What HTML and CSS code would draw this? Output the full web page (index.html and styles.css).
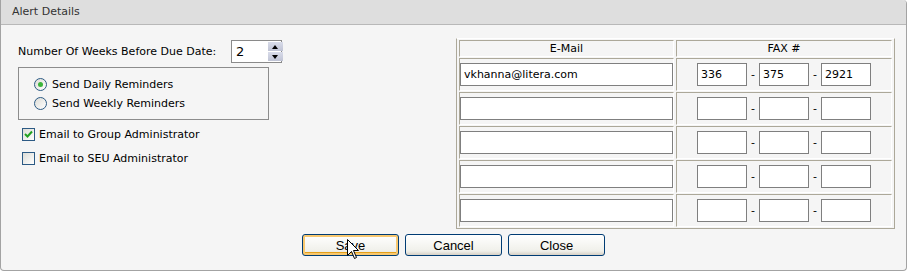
FILE: index.html
```html
<!DOCTYPE html>
<html lang="en">
<head>
    <meta charset="UTF-8">
    <title>Alert Details</title>
    <link rel="stylesheet" href="styles.css">
</head>
<body>
    <div class="panel">
        <div class="panel-title">Alert Details</div>
        <div class="panel-body">
            <div class="options">
                <div class="weeks-row">
                    <label for="weeks">Number Of Weeks Before Due Date:</label>
                    <div class="spinner">
                        <input type="text" id="weeks" value="2">
                        <div class="spin-buttons">
                            <span class="spin up"></span>
                            <span class="spin down"></span>
                        </div>
                    </div>
                </div>

                <div class="reminders">
                    <div class="radio-row"><span class="radio checked"></span>Send Daily Reminders</div>
                    <div class="radio-row"><span class="radio"></span>Send Weekly Reminders</div>
                </div>

                <div class="check-row">
                    <span class="checkbox">
                        <svg width="11" height="11" viewBox="0 0 11 11"><path d="M2 5 L4.5 7.5 L9 2.5" fill="none" stroke="#21a121" stroke-width="2"/></svg>
                    </span>Email to Group Administrator
                </div>
                <div class="check-row"><span class="checkbox"></span>Email to SEU Administrator</div>
            </div>

            <table class="contacts">
                <tr>
                    <th class="email-col">E-Mail</th>
                    <th class="fax-col">FAX #</th>
                </tr>
                <tr>
                    <td><input type="text" class="email" value="vkhanna@litera.com"></td>
                    <td><div class="fax"><input type="text" value="336"><span>-</span><input type="text" value="375"><span>-</span><input type="text" value="2921"></div></td>
                </tr>
                <tr>
                    <td><input type="text" class="email"></td>
                    <td><div class="fax"><input type="text"><span>-</span><input type="text"><span>-</span><input type="text"></div></td>
                </tr>
                <tr>
                    <td><input type="text" class="email"></td>
                    <td><div class="fax"><input type="text"><span>-</span><input type="text"><span>-</span><input type="text"></div></td>
                </tr>
                <tr>
                    <td><input type="text" class="email"></td>
                    <td><div class="fax"><input type="text"><span>-</span><input type="text"><span>-</span><input type="text"></div></td>
                </tr>
                <tr>
                    <td><input type="text" class="email"></td>
                    <td><div class="fax"><input type="text"><span>-</span><input type="text"><span>-</span><input type="text"></div></td>
                </tr>
            </table>
        </div>

        <div class="actions">
            <button type="button" class="focused">Save</button>
            <button type="button">Cancel</button>
            <button type="button">Close</button>
        </div>

        <svg class="cursor" width="13" height="21" viewBox="0 0 13 21">
            <path d="M0.5 0.5 L0.5 16.5 L4.5 12.5 L7.5 19.5 L9.5 18.5 L6.5 11.5 L11.5 11.5 Z" fill="#fff" stroke="#000" stroke-width="1"/>
        </svg>
    </div>
</body>
</html>
```

FILE: styles.css
```css
/* Page */
body {
    margin: 0;
    font-family: "DejaVu Sans", Tahoma, sans-serif;
    font-size: 11px;
    color: #000;
}

/* Panel */
.panel {
    position: relative;
    width: 907px;
    height: 271px;
    box-sizing: border-box;
    background: #f5f5f5;
    border: 1px solid #a3a3a3;
    border-top: none;
    border-radius: 0 4px 4px 4px;
}

.panel-title {
    height: 24px;
    line-height: 24px;
    padding-left: 11px;
    background: #dedede;
    border-bottom: 1px solid #b8b8b8;
    border-top-right-radius: 4px;
    color: #333;
    font-size: 11px;
}

.panel-body {
    display: flex;
    justify-content: space-between;
    padding: 13px 11px 0 17px;
}

/* Left column */
.options {
    width: 437px;
}

.weeks-row {
    display: flex;
    align-items: center;
    margin-top: 2px;
    height: 23px;
}

.weeks-row label {
    width: 213px;
}

.spinner {
    display: flex;
    align-items: center;
    width: 51px;
    height: 23px;
    box-sizing: border-box;
    border: 1px solid #8a8a8a;
    background: #fff;
}

.spinner input {
    width: 30px;
    border: none;
    outline: none;
    padding: 0 0 0 4px;
    font-family: inherit;
    font-size: 13px;
    background: transparent;
}

.spin-buttons {
    display: flex;
    flex-direction: column;
    gap: 1px;
    margin-left: 2px;
}

.spin {
    position: relative;
    width: 15px;
    height: 9px;
    background: linear-gradient(#d9dcea, #bfc3d4);
}

.spin::after {
    content: "";
    position: absolute;
    left: 4px;
    border-left: 3.5px solid transparent;
    border-right: 3.5px solid transparent;
}

.spin.up::after {
    top: 3px;
    border-bottom: 4px solid #000;
}

.spin.down::after {
    top: 3px;
    border-top: 4px solid #000;
}

.reminders {
    width: 251px;
    height: 53px;
    box-sizing: border-box;
    margin-top: 4px;
    padding: 7px 0 0 15px;
    border: 1px solid #8c8c8c;
}

.radio-row,
.check-row {
    display: flex;
    align-items: center;
    height: 19px;
}

.radio {
    width: 13px;
    height: 13px;
    box-sizing: border-box;
    margin-right: 5px;
    border: 1px solid #2c5a84;
    border-radius: 50%;
    background: linear-gradient(135deg, #dcdcd6, #fff);
    display: flex;
    align-items: center;
    justify-content: center;
}

.radio.checked::after {
    content: "";
    width: 5px;
    height: 5px;
    border-radius: 50%;
    background: #3bb43b;
}

.check-row {
    height: 24px;
    padding-left: 4px;
}

.reminders + .check-row {
    margin-top: 2px;
}

.checkbox {
    width: 13px;
    height: 13px;
    box-sizing: border-box;
    margin-right: 4px;
    border: 1px solid #2c5a84;
    background: linear-gradient(135deg, #dcdcd6, #fff);
    display: flex;
    align-items: center;
    justify-content: center;
}

/* Contacts table */
.contacts {
    width: 439px;
    table-layout: fixed;
    border-collapse: separate;
    border-spacing: 2px 1px;
    border: 1px solid #aca899;
    border-top-color: #fff;
}

.contacts th,
.contacts td {
    padding: 0;
    border: 1px solid #fff;
    border-top-color: #aca899;
    border-left-color: #aca899;
}

.contacts th {
    height: 15px;
    font-weight: normal;
    text-align: center;
}

.contacts td {
    height: 31px;
}

.email-col {
    width: 213px;
}

.fax-col {
    width: 214px;
}

.contacts input {
    height: 23px;
    box-sizing: border-box;
    border: 1px solid #7f7f7f;
    outline: none;
    padding: 0 3px;
    font-family: inherit;
    font-size: 11px;
    background: #fff;
    display: block;
}

.contacts input.email {
    width: 213px;
}

.fax {
    display: flex;
    align-items: center;
    justify-content: center;
}

.fax input {
    width: 50px;
}

.fax span {
    width: 12px;
    text-align: center;
}

/* Buttons */
.actions {
    display: flex;
    justify-content: center;
    gap: 6px;
    padding-top: 5px;
}

button {
    width: 97px;
    height: 22px;
    padding: 0;
    border: 1px solid #003c74;
    border-radius: 3px;
    background: linear-gradient(#ffffff, #f0f0ea 80%, #d6d0c5);
    font-family: "Liberation Sans", Arial, sans-serif;
    font-size: 13px;
    color: #000;
}

button.focused {
    box-shadow: inset 0 0 0 2px #f8c870, inset 0 -2px 0 1px #e5a01a;
}

.cursor {
    position: absolute;
    left: 346px;
    top: 239px;
}
```
